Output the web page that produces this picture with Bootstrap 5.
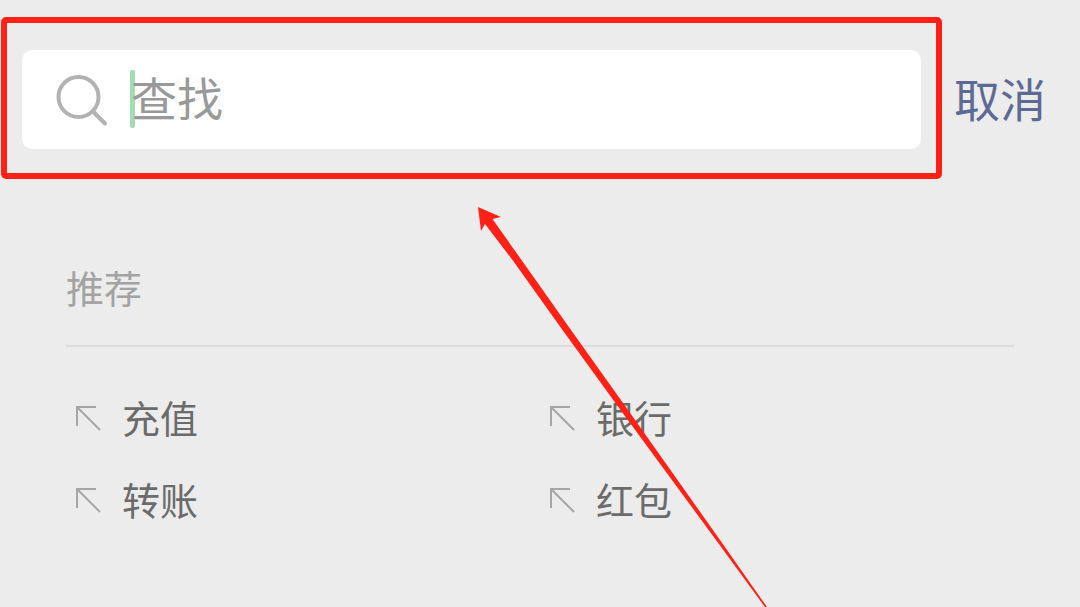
<!DOCTYPE html>
<html lang="zh-CN">
<head>
<meta charset="utf-8">
<meta name="viewport" content="width=device-width, initial-scale=1">
<title>查找</title>
<link href="https://cdn.jsdelivr.net/npm/bootstrap@5.3.0/dist/css/bootstrap.min.css" rel="stylesheet">
<style>
  body { background: #ececec; font-family: "Noto Sans CJK SC", sans-serif; overflow-x: hidden; }
  .search-top { padding: 17px 34px 0 1px; }
  .search-frame { border: 6px solid #ff2116; border-radius: 5px; padding: 27px 15px 24px; }
  .search-box { height: 99px; border-radius: 10px; padding-left: 33px; }
  .search-field { margin-left: 22px; }
  .search-field::before { content: ""; position: absolute; left: 0; top: 4px; width: 5px; height: 58px; border-radius: 2px; background: #a3dcb4; }
  .search-input { position: relative; width: 100%; height: 68px; padding: 0 0 8px 1px; border: 0; outline: 0; background: transparent; font-size: 46px; line-height: 60px; color: #555; }
  .search-input::placeholder { color: #999; opacity: 1; }
  .cancel-btn { padding: 0 0 2px; margin-left: 12px; border: 0; background: none; font-size: 46px; line-height: 68px; color: #5d6a94; }
  .suggest { padding: 79px 66px 0; }
  .suggest-title { margin: 0; padding-bottom: 29px; border-bottom: 2px solid #dcdcdc; font-size: 38px; line-height: 58px; font-weight: 400; color: #a3a3a3; }
  .suggest-list { padding-top: 41px; row-gap: 24px; }
  .suggest-link { gap: 20px; padding-left: 9px; font-size: 38px; line-height: 58px; color: #6b6b6b; text-decoration: none; }
  .pointer { position: absolute; left: 478px; top: 206px; pointer-events: none; }
</style>
</head>
<body>
<header class="search-top d-flex align-items-center">
  <div class="search-frame flex-grow-1">
    <form class="search-box bg-white d-flex align-items-center" role="search">
      <svg width="53" height="54" viewBox="0 0 53 54" fill="none" stroke="#b2b2b2" stroke-width="4" stroke-linecap="round" aria-hidden="true">
        <circle cx="23.500" cy="24" r="20"/><path d="M38 38.500 50 50.500"/>
      </svg>
      <div class="search-field position-relative flex-grow-1">
        <input class="search-input" type="text" placeholder="查找" aria-label="查找">
      </div>
    </form>
  </div>
  <button class="cancel-btn text-nowrap" type="button">取消</button>
</header>

<main class="suggest">
  <h1 class="suggest-title">推荐</h1>
  <div class="suggest-list row gx-0">
    <div class="col-6"><a class="suggest-link d-flex align-items-center" href="#"><svg width="27" height="27" viewBox="0 0 27 27" fill="none" stroke="#a6a6a6" stroke-width="2" aria-hidden="true"><path d="M2 22V3H21M2 3 25 26"/></svg>充值</a></div>
    <div class="col-6"><a class="suggest-link d-flex align-items-center" href="#"><svg width="27" height="27" viewBox="0 0 27 27" fill="none" stroke="#a6a6a6" stroke-width="2" aria-hidden="true"><path d="M2 22V3H21M2 3 25 26"/></svg>银行</a></div>
    <div class="col-6"><a class="suggest-link d-flex align-items-center" href="#"><svg width="27" height="27" viewBox="0 0 27 27" fill="none" stroke="#a6a6a6" stroke-width="2" aria-hidden="true"><path d="M2 22V3H21M2 3 25 26"/></svg>转账</a></div>
    <div class="col-6"><a class="suggest-link d-flex align-items-center" href="#"><svg width="27" height="27" viewBox="0 0 27 27" fill="none" stroke="#a6a6a6" stroke-width="2" aria-hidden="true"><path d="M2 22V3H21M2 3 25 26"/></svg>红包</a></div>
  </div>
</main>

<!-- Arrow pointing up at the search box -->
<svg class="pointer" width="290" height="401" viewBox="0 0 290 401" aria-hidden="true">
  <path fill="#ff2116" d="M0 1 23 11 14.500 13 43.500 54 93 124 150 204 242 334 289 401H287L238 334 142.500 204 84.500 124 34.500 54 7 18 3 25Z"/>
</svg>
<script src="https://cdn.jsdelivr.net/npm/bootstrap@5.3.0/dist/js/bootstrap.bundle.min.js"></script>
</body>
</html>
